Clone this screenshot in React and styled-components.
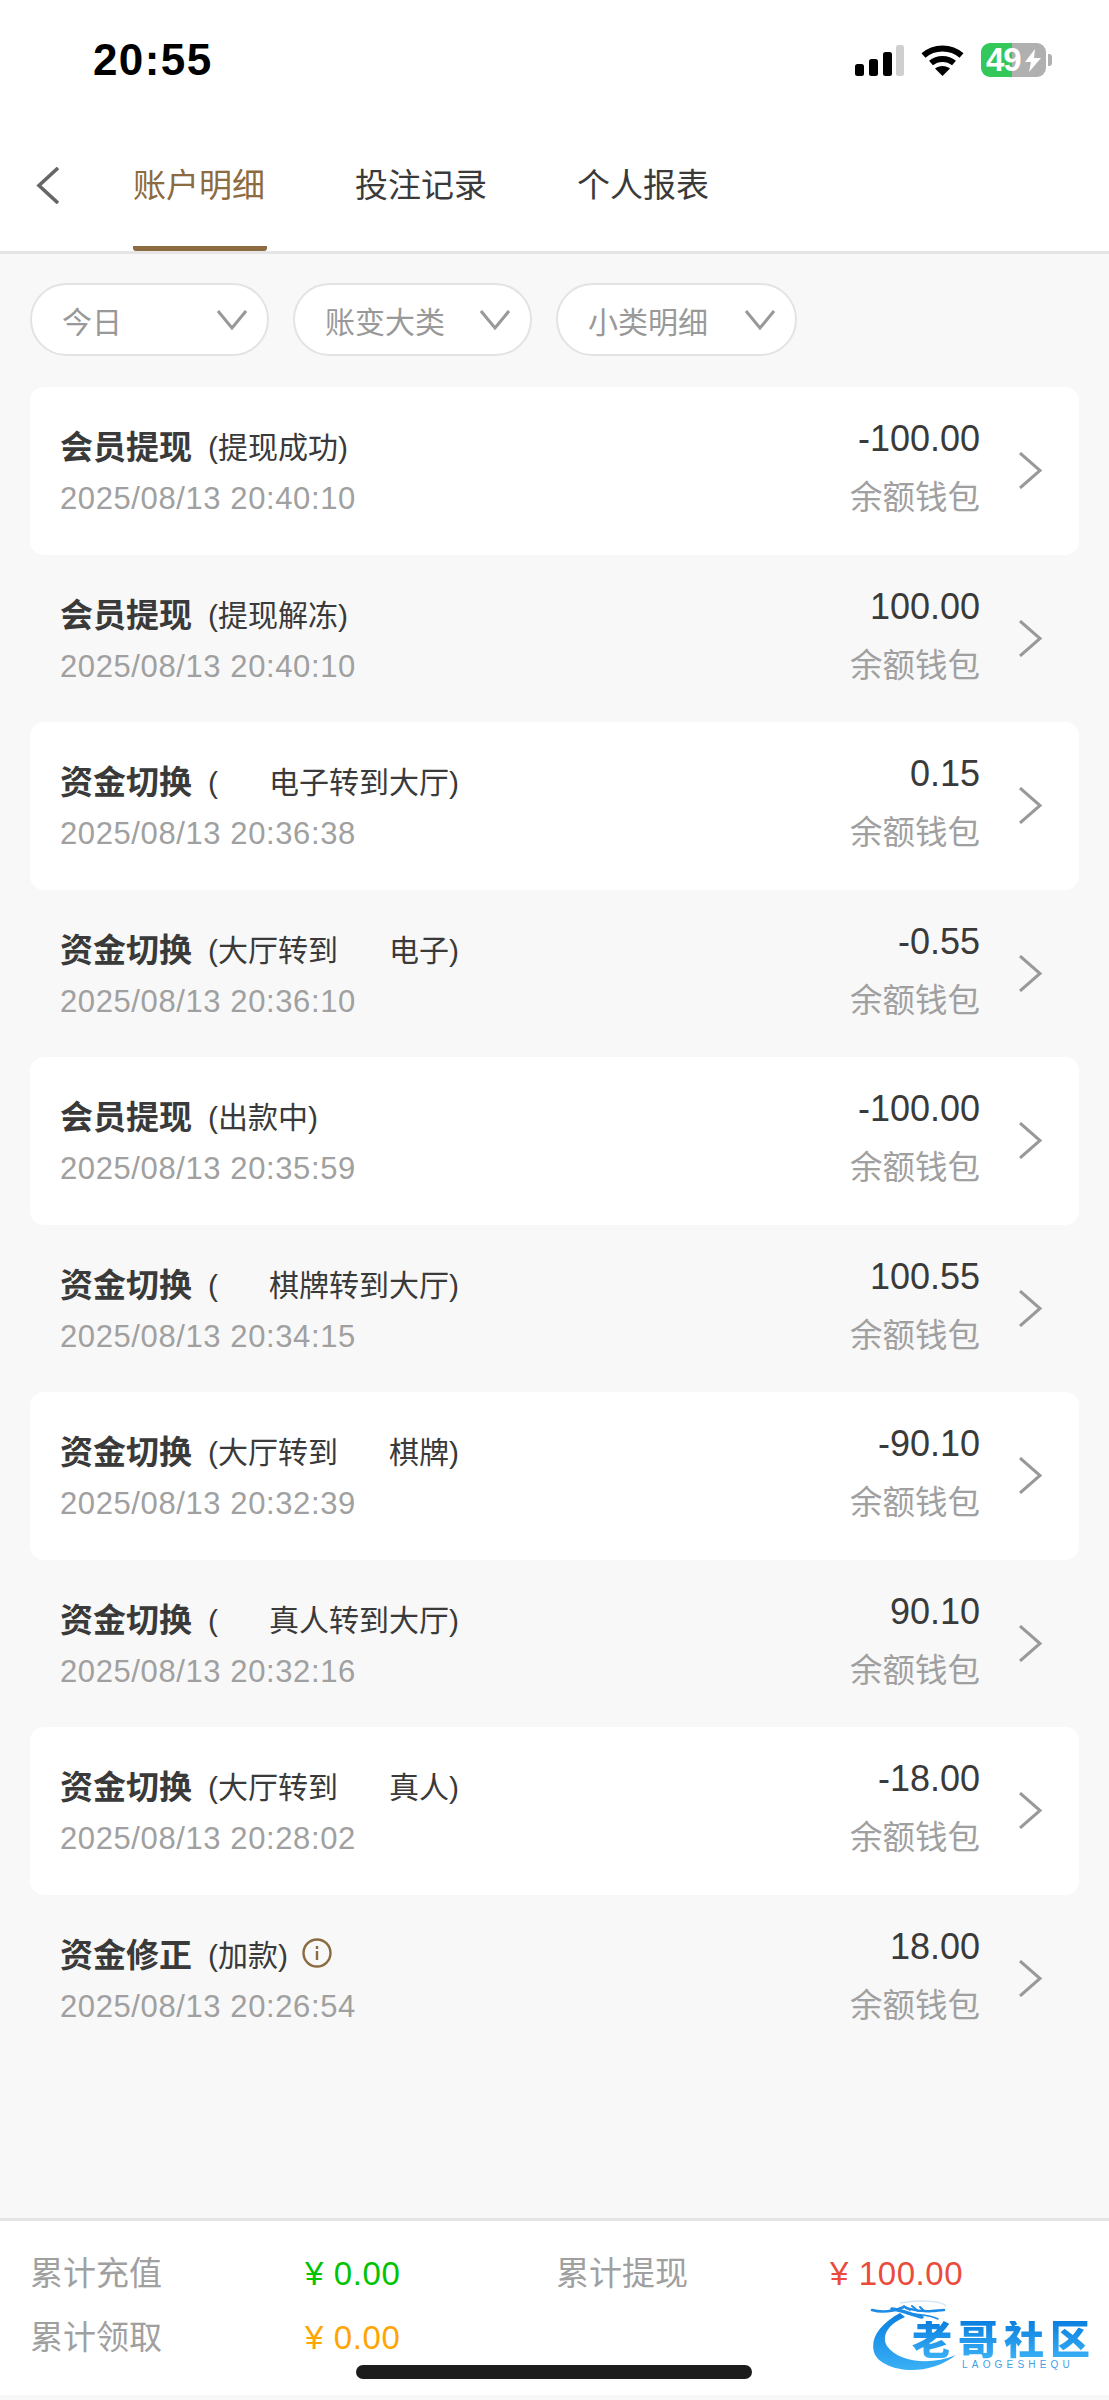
import React from 'react'
import styled, { createGlobalStyle } from 'styled-components'

const FONT = '"Liberation Sans", "Noto Sans CJK SC", sans-serif'
const GOLD = '#8b6b3f'

const GlobalStyle = createGlobalStyle`
    html, body {
        margin: 0;
        padding: 0;
        background: #f8f8f8;
    }
    * {
        box-sizing: border-box;
    }
`

const Page = styled.div`
    position: relative;
    display: flex;
    flex-direction: column;
    width: 1109px;
    height: 2400px;
    overflow: hidden;
    background: #f8f8f8;
    font-family: ${FONT};
`

const StatusBar = styled.div`
    display: flex;
    align-items: center;
    justify-content: space-between;
    height: 120px;
    padding: 0 57px 0 93px;
    background: #fff;
`

const Clock = styled.span`
    font-size: 44px;
    font-weight: 700;
    letter-spacing: 1.4px;
    color: #000;
`

const StatusIcons = styled.div`
    display: flex;
    align-items: center;
    gap: 17px;
`

const Battery = styled.div`
    position: relative;
    display: flex;
    align-items: center;
    width: 71px;
    height: 34px;
`

const BatteryBody = styled.div`
    display: flex;
    align-items: center;
    width: 65px;
    height: 34px;
    padding-left: 5px;
    border-radius: 9px;
    background: linear-gradient(90deg, #34c759 0 31px, #b0b0b0 31px);
    color: #fff;
    font-size: 33px;
    font-weight: 700;
    letter-spacing: -1px;
`

const BatteryNub = styled.div`
    width: 4px;
    height: 12px;
    margin-left: 2px;
    border-radius: 0 3px 3px 0;
    background: #b0b0b0;
`

const Bolt = styled.svg`
    position: absolute;
    left: 44px;
    top: 6px;
`

const TabBar = styled.div`
    display: flex;
    align-items: flex-start;
    height: 134px;
    padding-left: 36px;
    background: #fff;
    border-bottom: 3px solid #e5e5e5;
`

const BackIcon = styled.svg`
    flex: none;
    margin-top: 47px;
    margin-right: 73px;
`

const Tab = styled.div`
    width: 134px;
    height: 131px;
    margin-right: 88px;
    padding-top: 44px;
    font-size: 33px;
    line-height: 44px;
    white-space: nowrap;
    color: ${({ $active }) => ($active ? GOLD : '#3a3a3a')};
    border-bottom: 5px solid ${({ $active }) => ($active ? GOLD : 'transparent')};
    border-radius: 0 0 3px 3px;
`

const Filters = styled.div`
    display: flex;
    gap: 24px;
    padding: 29px 30px 31px;
`

const Pill = styled.div`
    display: flex;
    align-items: center;
    justify-content: space-between;
    width: ${({ $width }) => $width}px;
    height: 73px;
    padding: 0 20px 0 30px;
    border: 2px solid #e3e3e3;
    border-radius: 37px;
    background: #fff;
    font-size: 30px;
    color: #999;
`

const List = styled.div`
    flex: 1;
    padding: 0 30px;
`

const Row = styled.div`
    display: flex;
    align-items: center;
    height: 167.5px;
    padding: 0 36px 0 30px;
    border-radius: 14px;
    background: ${({ $white }) => ($white ? '#fff' : 'transparent')};
`

const RowMain = styled.div`
    flex: 1;
    padding-top: 1px;
`

const TitleLine = styled.div`
    display: flex;
    align-items: center;
    height: 40px;
    margin-bottom: 16px;
`

const Title = styled.span`
    font-size: 33px;
    font-weight: 700;
    color: #3a3a3a;
    margin-right: 16px;
`

const Sub = styled.span`
    font-size: 30px;
    white-space: pre;
    color: #3a3a3a;
`

const Blank = styled.span`
    display: inline-block;
    width: 51px;
`

const InfoIcon = styled.svg`
    margin-left: 14px;
`

const DateText = styled.div`
    font-size: 31px;
    line-height: 36px;
    letter-spacing: 0.6px;
    color: #a0a0a0;
`

const RowSide = styled.div`
    display: flex;
    flex-direction: column;
    align-items: flex-end;
    margin-right: 38px;
    padding-bottom: 4px;
`

const Amount = styled.div`
    font-size: 36px;
    line-height: 40px;
    margin-bottom: 19px;
    color: #3a3a3a;
`

const Wallet = styled.div`
    font-size: 32.5px;
    line-height: 40px;
    color: #a0a0a0;
`

const Footer = styled.div`
    display: grid;
    grid-template-columns: 275px 251px 274px 1fr;
    grid-auto-rows: 64px;
    height: 177px;
    margin-bottom: 5px;
    padding: 18px 0 0 30px;
    background: #fff;
    border-top: 3px solid #e5e5e5;
    align-items: center;
`

const StatLabel = styled.span`
    font-size: 33px;
    color: #a0a0a0;
`

const StatValue = styled.span`
    padding-top: 5px;
    font-size: 33px;
    letter-spacing: 0.6px;
    color: ${({ $color }) => $color};
`

const HomeBar = styled.div`
    position: absolute;
    left: 356px;
    top: 2365px;
    width: 396px;
    height: 14px;
    border-radius: 7px;
    background: #1c1c1c;
`

const Logo = styled.div`
    position: absolute;
    left: 870px;
    top: 2300px;
    width: 222px;
    height: 75px;
`

const LogoArt = styled.svg`
    position: absolute;
    inset: 0;
`

const LogoName = styled.div`
    position: absolute;
    left: 42px;
    top: 21px;
    font-size: 40px;
    line-height: 38px;
    font-weight: 900;
    letter-spacing: 6px;
    white-space: nowrap;
    background: linear-gradient(180deg, #0a7fe0, #3ab0f5);
    -webkit-background-clip: text;
    background-clip: text;
    color: transparent;
`

const LogoSub = styled.div`
    position: absolute;
    left: 92px;
    top: 60px;
    font-size: 10px;
    line-height: 10px;
    letter-spacing: 4.2px;
    white-space: nowrap;
    color: #3f9fe6;
`

const filters = [
    { label: '今日', width: 239 },
    { label: '账变大类', width: 239 },
    { label: '小类明细', width: 241 },
]

const rows = [
    { title: '会员提现', sub: '(提现成功)', date: '2025/08/13 20:40:10', amount: '-100.00' },
    { title: '会员提现', sub: '(提现解冻)', date: '2025/08/13 20:40:10', amount: '100.00' },
    { title: '资金切换', sub: '(|电子转到大厅)', date: '2025/08/13 20:36:38', amount: '0.15' },
    { title: '资金切换', sub: '(大厅转到|电子)', date: '2025/08/13 20:36:10', amount: '-0.55' },
    { title: '会员提现', sub: '(出款中)', date: '2025/08/13 20:35:59', amount: '-100.00' },
    { title: '资金切换', sub: '(|棋牌转到大厅)', date: '2025/08/13 20:34:15', amount: '100.55' },
    { title: '资金切换', sub: '(大厅转到|棋牌)', date: '2025/08/13 20:32:39', amount: '-90.10' },
    { title: '资金切换', sub: '(|真人转到大厅)', date: '2025/08/13 20:32:16', amount: '90.10' },
    { title: '资金切换', sub: '(大厅转到|真人)', date: '2025/08/13 20:28:02', amount: '-18.00' },
    { title: '资金修正', sub: '(加款)', date: '2025/08/13 20:26:54', amount: '18.00', info: true },
]

const Chevron = ({ width, height, color, stroke, points }) => (
    <svg width={width} height={height} viewBox={`0 0 ${width} ${height}`} fill="none" style={{ flex: 'none' }}>
        <polyline points={points} stroke={color} strokeWidth={stroke} />
    </svg>
)

const SignalIcon = () => (
    <svg width="49" height="31" viewBox="0 0 49 31">
        <rect x="0" y="19" width="9" height="12" rx="2.5" fill="#000" />
        <rect x="14" y="14" width="9" height="17" rx="2.5" fill="#000" />
        <rect x="28" y="7" width="9" height="24" rx="2.5" fill="#000" />
        <rect x="41" y="0" width="8" height="31" rx="2.5" fill="#cfcfcf" />
    </svg>
)

const WifiIcon = () => (
    <svg width="43" height="32" viewBox="0 0 43 32" fill="none" stroke="#000" strokeWidth="6">
        <path d="M2.5 11.5C13 2 30 2 40.5 11.5" />
        <path d="M10 19c6.5-5.5 16.5-5.5 23 0" />
        <path d="M21.5 32l-7.5-7.5c4-3.5 11-3.5 15 0z" fill="#000" stroke="none" />
    </svg>
)

const TransactionRow = ({ item, white }) => {
    const [before, after] = item.sub.split('|')
    return (
        <Row $white={white}>
            <RowMain>
                <TitleLine>
                    <Title>{item.title}</Title>
                    <Sub>
                        {before}
                        {after && <Blank />}
                        {after}
                    </Sub>
                    {item.info && (
                        <InfoIcon width="30" height="30" viewBox="0 0 30 30" fill="none" stroke={GOLD} strokeWidth="2.4">
                            <circle cx="15" cy="15" r="13.5" />
                            <path d="M15 13v9M15 8v3" />
                        </InfoIcon>
                    )}
                </TitleLine>
                <DateText>{item.date}</DateText>
            </RowMain>
            <RowSide>
                <Amount>{item.amount}</Amount>
                <Wallet>余额钱包</Wallet>
            </RowSide>
            <Chevron width={25} height={37} color="#999" stroke={3} points="2,1 22,18.5 2,36" />
        </Row>
    )
}

const App = () => (
    <Page>
        <GlobalStyle />
        <StatusBar>
            <Clock>20:55</Clock>
            <StatusIcons>
                <SignalIcon />
                <WifiIcon />
                <Battery>
                    <BatteryBody>49</BatteryBody>
                    <BatteryNub />
                    <Bolt width="16" height="23" viewBox="0 0 16 23">
                        <path d="M10 0L0 13h6l-2 10L16 9H9z" fill="#fff" />
                    </Bolt>
                </Battery>
            </StatusIcons>
        </StatusBar>
        <TabBar>
            <BackIcon width="24" height="37" viewBox="0 0 24 37" fill="none">
                <polyline points="22,1 3,18.5 22,36" stroke="#666" strokeWidth="3.6" />
            </BackIcon>
            <Tab $active>账户明细</Tab>
            <Tab>投注记录</Tab>
            <Tab>个人报表</Tab>
        </TabBar>
        <Filters>
            {filters.map((f) => (
                <Pill key={f.label} $width={f.width}>
                    {f.label}
                    <Chevron width={30} height={20} color="#999" stroke={3} points="1,1 15,18 29,1" />
                </Pill>
            ))}
        </Filters>
        <List>
            {rows.map((item, i) => (
                <TransactionRow key={i} item={item} white={i % 2 === 0} />
            ))}
        </List>
        <Footer>
            <StatLabel>累计充值</StatLabel>
            <StatValue $color="#00c400">¥ 0.00</StatValue>
            <StatLabel>累计提现</StatLabel>
            <StatValue $color="#ea4b3c">¥ 100.00</StatValue>
            <StatLabel>累计领取</StatLabel>
            <StatValue $color="#ffa500">¥ 0.00</StatValue>
        </Footer>
        <HomeBar />
        <Logo>
            <LogoArt width="222" height="75" viewBox="0 0 222 75">
                <defs>
                    <linearGradient id="arc" x1="0" y1="0" x2="0" y2="1">
                        <stop offset="0" stopColor="#0a7fe0" />
                        <stop offset="1" stopColor="#3ab0f5" />
                    </linearGradient>
                </defs>
                <path d="M30 13C10 24 0 38 4 52c5 18 50 28 82 3C60 66 28 62 17 46 11 36 18 24 35 17z" fill="url(#arc)" />
                <g fill="none" stroke="#1c8be6" strokeWidth="2.5" strokeLinecap="round">
                    <path d="M2 10c10 3 22 1 32-3" />
                    <path d="M22 9c10 1 20 6 30 8" strokeWidth="3.5" />
                    <path d="M36 8c8 2 14 4 26 3 4 0 8-1 12-1" />
                    <path d="M44 14c8 1 16 1 24 5" strokeWidth="1.5" />
                    <path d="M34 6l6 4M42 6l6 5M50 7l4 4" strokeWidth="2" />
                </g>
                <path d="M30 3c16-3 40-3 46 3" fill="none" stroke="#cfe6f8" strokeWidth="1.5" />
            </LogoArt>
            <LogoName>老哥社区</LogoName>
            <LogoSub>LAOGESHEQU</LogoSub>
        </Logo>
    </Page>
)

export default App
